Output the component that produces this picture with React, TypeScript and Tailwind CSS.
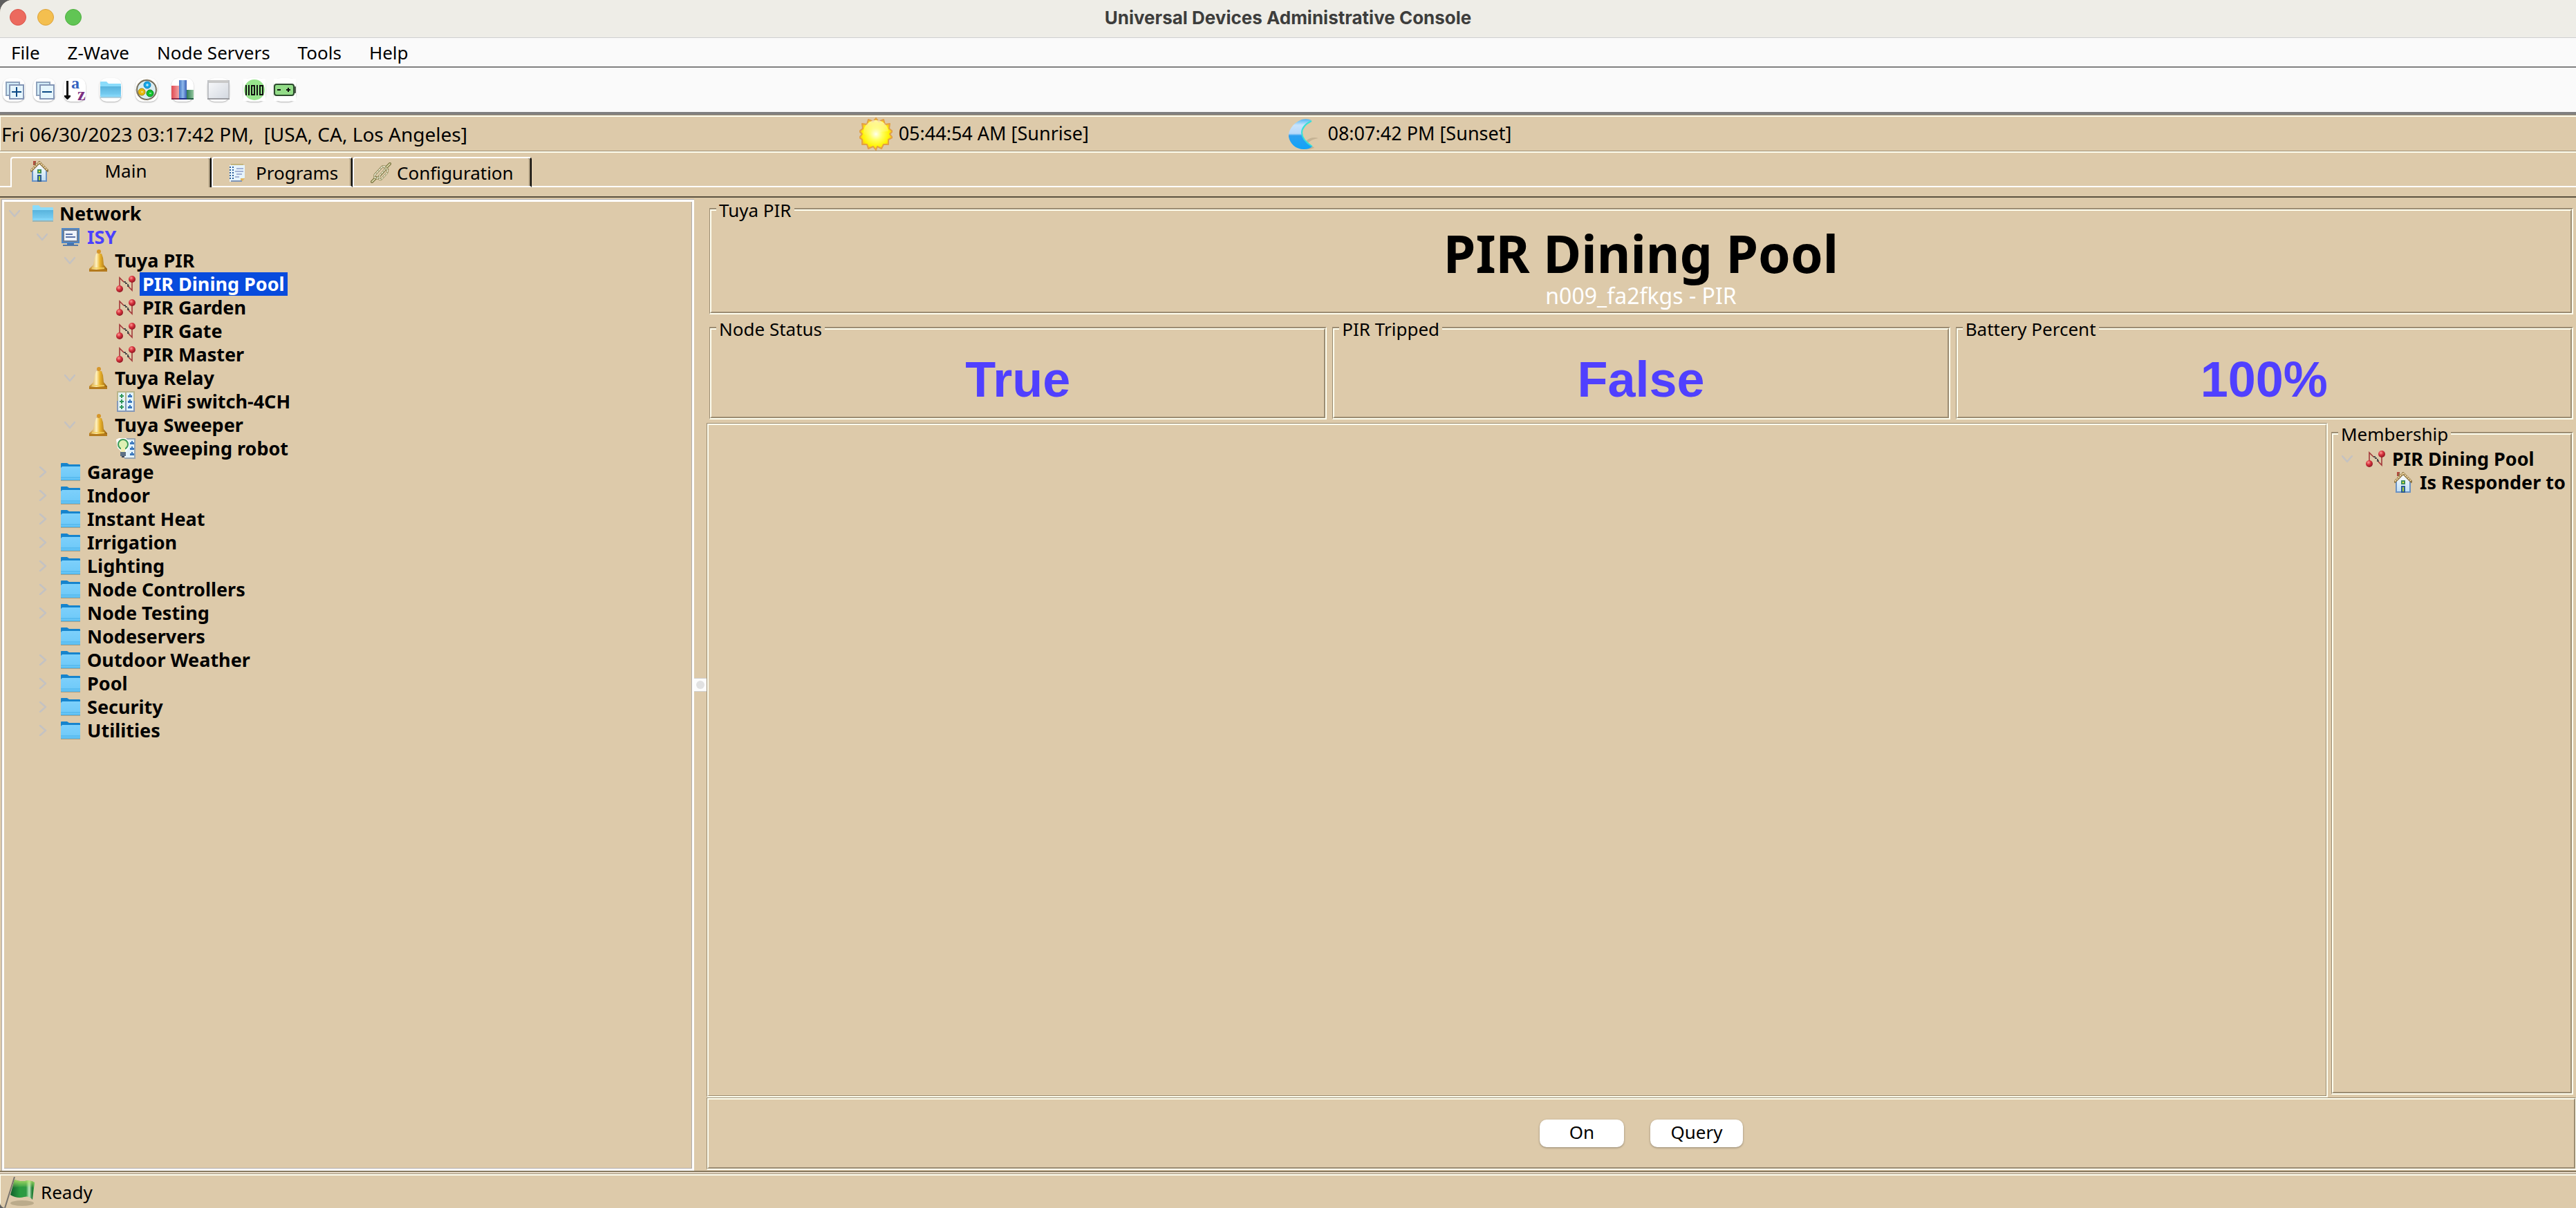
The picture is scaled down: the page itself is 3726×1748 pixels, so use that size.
import { useState, type ReactNode } from "react";

/* ---------- toolbar drawings (32 x 32) ---------- */

function Tool({ children }: { children: ReactNode }) {
  return (
    <svg viewBox="0 0 32 32" className="block h-8 w-8" aria-hidden="true">
      {children}
    </svg>
  );
}

function Squares({ plus }: { plus: boolean }) {
  return (
    <Tool>
      <rect x="5" y="5" width="19" height="19" fill="#d3ecf8" stroke="#8fa3bd" strokeWidth="2" />
      <rect x="10" y="9" width="20" height="21" fill="#fff" />
      <rect x="10" y="9" width="20" height="20" fill="#e6f6fd" stroke="#8395b5" strokeWidth="2" />
      <rect x="13" y="18" width="14" height="2" fill="#0c4a86" />
      {plus && <rect x="19" y="12" width="2" height="14" fill="#0c4a86" />}
    </Tool>
  );
}

function SortAz() {
  return (
    <Tool>
      <path d="M4 3h3v21h3v2l-4 4h-1l-4-4v-2h3z" fill="#0a0a0a" />
      <text x="11" y="14" fontSize="24" fontWeight="700" fontFamily="'Liberation Serif', serif" fill="#3261c0">
        a
      </text>
      <text x="20" y="31" fontSize="26" fontWeight="700" fontFamily="'Liberation Serif', serif" fill="#7c2f80">
        z
      </text>
    </Tool>
  );
}

function OpenFolder() {
  return (
    <svg viewBox="0 0 32 26" className="block h-[26px] w-8" aria-hidden="true">
      <defs>
        <linearGradient id="of" x1="0" y1="0" x2="0" y2="1">
          <stop offset="0" stopColor="#58b3dc" />
          <stop offset="1" stopColor="#7fd3f7" />
        </linearGradient>
      </defs>
      <path d="M1 2q0-1 1-1h8l3 3h17q1 0 1 1v5H1z" fill="#8bdcfb" />
      <path d="M1 8h30v14q0 1-1 1H2q-1 0-1-1z" fill="url(#of)" />
      <path d="M1 24h30" stroke="#5f9fbd" strokeWidth="1" />
      <path d="M2 21h28" stroke="#8fdcfa" strokeWidth="1" />
    </svg>
  );
}

function Ring() {
  return (
    <Tool>
      <circle cx="16" cy="16" r="14" fill="#d9edf2" stroke="#6f6857" strokeWidth="2" />
      <circle cx="16" cy="16" r="15" fill="none" stroke="#b9ae96" strokeWidth="1" strokeDasharray="3 2" />
      <circle cx="17" cy="9" r="5" fill="#12a6e8" stroke="#1580b8" />
      <circle cx="9" cy="19" r="5" fill="#e8b90c" stroke="#a8830c" />
      <circle cx="21" cy="21" r="5" fill="#10c42a" stroke="#0c7c1c" />
      <path d="M15 9h4M17 7v4M8 19h3M20 21h3" stroke="#e9fbff" strokeWidth="1" />
    </Tool>
  );
}

function Bars() {
  return (
    <Tool>
      <defs>
        <linearGradient id="b1">
          <stop offset="0" stopColor="#e14a52" />
          <stop offset="1" stopColor="#f0a4a6" />
        </linearGradient>
        <linearGradient id="b2">
          <stop offset="0" stopColor="#4477c4" />
          <stop offset=".5" stopColor="#8db8ea" />
          <stop offset="1" stopColor="#3a5fb4" />
        </linearGradient>
        <linearGradient id="b3">
          <stop offset="0" stopColor="#2f7a52" />
          <stop offset="1" stopColor="#94c8a0" />
        </linearGradient>
      </defs>
      <rect x="0" y="10" width="11" height="20" fill="url(#b1)" />
      <rect x="11" y="2" width="11" height="28" fill="url(#b2)" />
      <rect x="22" y="16" width="10" height="14" fill="url(#b3)" />
      <path d="M0 29h11" stroke="#8c2b49" strokeWidth="2" />
      <path d="M11 29h11" stroke="#25328c" strokeWidth="2" />
      <path d="M22 29h10" stroke="#235c45" strokeWidth="2" />
    </Tool>
  );
}

function Pane() {
  return (
    <Tool>
      <defs>
        <linearGradient id="pn" x1="0" y1="0" x2="1" y2="1">
          <stop offset="0" stopColor="#f8f9fb" />
          <stop offset="1" stopColor="#d3d8e0" />
        </linearGradient>
      </defs>
      <rect x="1" y="3" width="30" height="26" fill="url(#pn)" stroke="#c0c2c6" strokeWidth="2" />
      <rect x="2" y="2" width="28" height="4" fill="#c9c9c9" />
      <path d="M0 29h32" stroke="#9a9ba0" strokeWidth="2" />
    </Tool>
  );
}

function Bits() {
  return (
    <Tool>
      <rect width="32" height="32" fill="#fff" />
      <circle cx="16" cy="16" r="15" fill="#97e58c" />
      <g fill="none" stroke="#111" strokeWidth="2">
        <path d="M4 9v15M8 9v15M20 9v15" />
        <rect x="12" y="10" width="4" height="13" />
        <rect x="24" y="10" width="4" height="13" />
      </g>
    </Tool>
  );
}

function Battery() {
  return (
    <Tool>
      <rect width="32" height="32" fill="#fff" />
      <rect x="29" y="11" width="3" height="10" rx="1" fill="#4e5a4c" />
      <rect x="1" y="8" width="28" height="16" rx="3" fill="#93dc88" stroke="#2c4a2e" strokeWidth="2" />
      <path d="M5 16h5M18 16h6M21 13v6" stroke="#111" strokeWidth="2" />
    </Tool>
  );
}

/* ---------- tree, tab and bar drawings ---------- */

function House() {
  return (
    <svg viewBox="0 0 13 15" className="block h-[30px] w-[26px]" aria-hidden="true">
      <defs>
        <linearGradient id="hs" x1="0" y1="0" x2="0" y2="1">
          <stop offset="0" stopColor="#ffffff" />
          <stop offset="1" stopColor="#bcdcf2" />
        </linearGradient>
      </defs>
      <path d="M2 0h2v1h-1v2h-1z" fill="#b24a3c" />
      <path d="M3 1h1v2h-1z" fill="#8b6b46" />
      <path d="M1 7l5.500-5.500L12 7v8H1z" fill="url(#hs)" />
      <path d="M1.500 7v7.500h10V7" fill="none" stroke="#6a92c4" />
      <path d="M0 7.500l6.500-6.500 6.500 6.500" fill="none" stroke="#8d7442" strokeWidth="1.800" />
      <path d="M0.500 6.700l6-6 6 6" fill="none" stroke="#f3d9a6" strokeWidth="0.900" strokeDasharray="1.200 0.500" />
      <rect x="5" y="6" width="3" height="3" fill="#3f8f5c" />
      <rect x="6" y="7" width="1" height="1" fill="#f2ea2e" />
      <rect x="5" y="10" width="3" height="5" fill="#2c5c94" />
      <rect x="6" y="11" width="1" height="3" fill="#a6d13c" />
    </svg>
  );
}

function Notes() {
  return (
    <svg viewBox="0 0 11 13" className="block h-[26px] w-[22px]" aria-hidden="true">
      <rect x="1" y="0" width="9" height="1" fill="#c3b47c" />
      <path d="M0 1h11v9l-2 3H0z" fill="#e6f4fc" />
      <g fill="#2d5e9c">
        <rect x="0" y="2" width="1" height="1" /><rect x="2" y="2" width="1" height="1" />
        <rect x="0" y="4" width="1" height="1" /><rect x="2" y="4" width="1" height="1" />
        <rect x="0" y="6" width="1" height="1" /><rect x="2" y="6" width="1" height="1" />
        <rect x="0" y="8" width="1" height="1" /><rect x="2" y="8" width="1" height="1" />
        <rect x="0" y="10" width="1" height="1" /><rect x="2" y="10" width="1" height="1" />
      </g>
      <path d="M5 3.500h5M4 5.500h6M5 7.500h4M4 9.500h3" stroke="#8a9bc8" strokeWidth=".8" />
      <path d="M8 13v-2.500h3L9 13z" fill="#e2b55e" />
      <path d="M1 12.500h8" stroke="#7f95b8" />
    </svg>
  );
}

function Chain() {
  return (
    <svg viewBox="0 0 15 15" className="block h-[30px] w-[30px]" aria-hidden="true">
      <g fill="none" strokeLinecap="round" strokeLinejoin="round">
        <path d="M1 14l3-3M11 4l3-3" stroke="#78733f" strokeWidth="2" />
        <path d="M1 14l3-3M11 4l3-3" stroke="#e9e6b8" strokeWidth=".8" />
        <path d="M3 9l5.500-6 2 0v2.500L5 11.500 3 11z" stroke="#78733f" strokeWidth="1.500" />
        <path d="M3 9l5.500-6 2 0v2.500L5 11.500 3 11z" stroke="#fbfae6" strokeWidth=".7" strokeDasharray="1.400 .8" />
        <path d="M6.500 9.500l4.500-5 1.500.5-.5 2.500-4.500 5-1.500-.5z" stroke="#857f4a" strokeWidth="1.300" />
        <path d="M6.500 9.500l4.500-5 1.500.5-.5 2.500-4.500 5-1.500-.5z" stroke="#fbfae6" strokeWidth=".6" strokeDasharray="1.400 .8" />
      </g>
    </svg>
  );
}

function Sensor() {
  return (
    <svg viewBox="0 0 14 12" className="block h-6 w-7" aria-hidden="true">
      <defs>
        <radialGradient id="rb" cx=".38" cy=".32" r=".7">
          <stop offset="0" stopColor="#ff9a94" />
          <stop offset=".45" stopColor="#d8343f" />
          <stop offset="1" stopColor="#8c1420" />
        </radialGradient>
      </defs>
      <path d="M2.500 9V1.500L5.500 4.500M9 8l2.500 2.500V4" fill="none" stroke="#a3383a" strokeWidth=".8" />
      <path d="M5.500 4.500h1.500M6.500 5.500h1.500M8 6.500h1M8 7.500h1.500" stroke="#20242a" strokeWidth=".8" />
      <circle cx="2.500" cy="9.500" r="2.500" fill="url(#rb)" />
      <circle cx="11.500" cy="2.500" r="2.500" fill="url(#rb)" />
    </svg>
  );
}

function Monitor() {
  return (
    <svg viewBox="0 0 13 13" className="block h-[26px] w-[26px]" aria-hidden="true">
      <rect x="0" y="0" width="13" height="11" fill="#4f87c7" />
      <rect x="1" y="1" width="11" height="9" fill="#6d7f98" />
      <rect x="2" y="2" width="9" height="7" fill="#eef3fb" />
      <path d="M3 4.500h5M3 6.500h7" stroke="#5a73a8" />
      <rect x="4" y="11" width="5" height="1" fill="#3f70ae" />
      <rect x="1" y="12" width="11" height="1" fill="#5479a8" />
    </svg>
  );
}

function Bell() {
  return (
    <svg viewBox="0 0 13 16" className="block h-8 w-[26px]" aria-hidden="true">
      <defs>
        <linearGradient id="bl">
          <stop offset="0" stopColor="#b97a14" />
          <stop offset=".4" stopColor="#fff2c0" />
          <stop offset=".6" stopColor="#eab42c" />
          <stop offset="1" stopColor="#8f5a10" />
        </linearGradient>
      </defs>
      <circle cx="7" cy="1.500" r="1.500" fill="#d6962a" />
      <path d="M5 3h4l1 3 .5 5L13 14v2H0v-2l3-3 1-5z" fill="url(#bl)" />
      <path d="M0 14.500h13v1.500H0z" fill="#b47a1c" />
      <path d="M2 13.500h9" stroke="#f4d060" strokeWidth=".8" />
    </svg>
  );
}

function People({ x }: { x: number }) {
  return (
    <g transform={`translate(${x} 0)`} fill="#3b78bd">
      <path d="M1 2h1v1h1v1.500H0V3h1zM1 6h1v1h1v1.500H0V7h1zM1 10h1v1h1v1.500H0V11h1z" />
    </g>
  );
}

function SwitchBoard() {
  return (
    <svg viewBox="0 0 13 15" className="block h-[30px] w-[26px]" aria-hidden="true">
      <rect width="13" height="15" fill="#b8b58c" />
      <rect x="0" y="7" width="13" height="8" fill="#8598b8" />
      <rect x="1" y="1" width="5" height="13" fill="#e3f3f6" />
      <rect x="7" y="1" width="5" height="13" fill="#e3f3fb" />
      <g fill="#2f9558">
        <path d="M3 2h1v1h1v1H4v1H3V4H2V3h1zM3 6h1v1h1v1H4v1H3V8H2V7h1zM3 10h1v1h1v1H4v1H3v-1H2v-1h1z" />
      </g>
      <People x={8} />
    </svg>
  );
}

function BulbBoard() {
  return (
    <svg viewBox="0 0 14 15" className="block h-[30px] w-7" aria-hidden="true">
      <rect x="6" y="0" width="8" height="15" fill="#9aa6b0" />
      <rect x="7" y="1" width="6" height="13" fill="#e3f3fb" />
      <People x={10} />
      <path d="M0 1l2-1h5l2 2v5l-2 3v4H4v-4L1 7z" fill="#fff" />
      <circle cx="5" cy="4.500" r="3.500" fill="#dff0b4" stroke="#3b9a58" />
      <path d="M3.500 7h3v3h-3z" fill="#f2efb4" />
      <rect x="3" y="10" width="4" height="3" fill="#5e7186" />
      <rect x="4" y="13" width="2" height="1" fill="#3d4a5c" />
    </svg>
  );
}

function Folder() {
  return (
    <svg viewBox="0 0 30 28" className="block h-7 w-[30px]" aria-hidden="true">
      <defs>
        <linearGradient id="fd" x1="0" y1="0" x2="0" y2="1">
          <stop offset="0" stopColor="#7dd0fb" />
          <stop offset="1" stopColor="#6cc8f8" />
        </linearGradient>
      </defs>
      <path d="M1 2q0-1 1-1h8l3 2h15q1 0 1 1v8H1z" fill="#1684cd" />
      <path d="M1 26h28" stroke="#8d8368" strokeWidth="2" opacity=".6" />
      <path d="M1 8l2-2h24l2 0v18q0 2-1 2H2q-1 0-1-2z" fill="url(#fd)" />
      <path d="M1 22h28M1 25h28" stroke="#45aee6" strokeWidth="1" />
    </svg>
  );
}

function Sun() {
  return (
    <svg viewBox="0 0 48 48" className="block h-12 w-12" aria-hidden="true">
      <defs>
        <radialGradient id="sn" cx=".5" cy=".5" r=".5">
          <stop offset="0" stopColor="#fffff0" />
          <stop offset=".4" stopColor="#ffff5a" />
          <stop offset=".8" stopColor="#fff200" />
          <stop offset="1" stopColor="#f7b52a" />
        </radialGradient>
        <linearGradient id="sg" x1="0" y1="0" x2="0" y2="1">
          <stop offset="0" stopColor="#fff8d0" stopOpacity=".8" />
          <stop offset="1" stopColor="#fff8d0" stopOpacity="0" />
        </linearGradient>
      </defs>
      <path
        d="M24 1l4 5 7-3 2 7 7-1-1 7 5 4-4 4 4 5-6 3 0 7-7 0-3 6-6-3-2 5-4-5-7 3-2-6-7 0 0-7-4-3 4-5-4-4 5-4-1-7 7 1 2-7 7 3z"
        fill="url(#sn)"
        stroke="#e2a045"
        strokeWidth="2"
        strokeLinejoin="round"
      />
      <path d="M6 24a18 18 0 0 1 36-4q-16 0-24 6-6 3-12-2z" fill="url(#sg)" />
    </svg>
  );
}

function Moon() {
  return (
    <svg viewBox="0 0 48 48" className="block h-12 w-12" aria-hidden="true">
      <defs>
        <linearGradient id="mn" x1="0" y1="0" x2="0" y2="1">
          <stop offset="0" stopColor="#4cb4f4" />
          <stop offset=".2" stopColor="#c8e4fc" />
          <stop offset=".48" stopColor="#b8d8fa" />
          <stop offset=".55" stopColor="#2e9ff0" />
          <stop offset="1" stopColor="#10a4f8" />
        </linearGradient>
      </defs>
      <path d="M26 34q8-7 18-4-10 1-16 8zM20 45q8 3 18-1l-2-2z" fill="#b5a486" opacity=".6" />
      <path d="M34 4Q28 1 20 3C6 8 0 20 1 28c2 10 10 18 22 18q8 0 12-4Q20 34 20 22T34 4z" fill="url(#mn)" />
      <path d="M34 5Q20 12 20 22t15 20" fill="none" stroke="#35e0d8" strokeWidth="2" />
    </svg>
  );
}

function Flag() {
  return (
    <svg viewBox="0 0 52 46" className="block h-[46px] w-[52px]" aria-hidden="true">
      <defs>
        <linearGradient id="fl" x1="0" y1="0" x2="1" y2="0">
          <stop offset="0" stopColor="#12602c" />
          <stop offset=".4" stopColor="#2a9c40" />
          <stop offset=".65" stopColor="#2f9a44" />
          <stop offset=".78" stopColor="#c2eac0" />
          <stop offset=".9" stopColor="#1f7a34" />
          <stop offset="1" stopColor="#3fae4a" />
        </linearGradient>
        <linearGradient id="fm" x1="0" y1="0" x2="0" y2="1">
          <stop offset="0" stopColor="#b5e36a" stopOpacity=".9" />
          <stop offset="1" stopColor="#b5e36a" stopOpacity="0" />
        </linearGradient>
      </defs>
      <ellipse cx="31" cy="39" rx="17" ry="4" fill="#b3a283" opacity=".8" />
      <path d="M6 46L20 1" stroke="#77736c" strokeWidth="2" />
      <path d="M20 5q8 3 15 2 8-2 14 2l-3 25q-5-6-12-4-10 3-20-3z" fill="url(#fl)" />
      <path d="M20 5q8 3 15 2 8-2 14 2l-1 8q-14-4-31 0z" fill="url(#fm)" />
    </svg>
  );
}

function Chevron({ open }: { open: boolean }) {
  return (
    <svg viewBox="0 0 16 16" className="block h-4 w-4" aria-hidden="true">
      <path
        d={open ? "M1 4l7 8 7-8" : "M5 1l8 7-8 7"}
        fill="none"
        stroke="#c4c2c2"
        strokeWidth="2.500"
        strokeLinecap="round"
        strokeLinejoin="round"
      />
    </svg>
  );
}

/* ---------- tree ---------- */

type NodeItem = { label: string; icon: ReactNode; state?: "open" | "closed"; blue?: boolean; kids?: NodeItem[] };

const closed = (label: string): NodeItem => ({ label, icon: <Folder />, state: "closed" });
const sensor = (label: string): NodeItem => ({ label, icon: <Sensor /> });

const network: NodeItem[] = [
  {
    label: "Network",
    icon: <OpenFolder />,
    state: "open",
    kids: [
      {
        label: "ISY",
        icon: <Monitor />,
        state: "open",
        blue: true,
        kids: [
          {
            label: "Tuya PIR",
            icon: <Bell />,
            state: "open",
            kids: [sensor("PIR Dining Pool"), sensor("PIR Garden"), sensor("PIR Gate"), sensor("PIR Master")],
          },
          { label: "Tuya Relay", icon: <Bell />, state: "open", kids: [{ label: "WiFi switch-4CH", icon: <SwitchBoard /> }] },
          { label: "Tuya Sweeper", icon: <Bell />, state: "open", kids: [{ label: "Sweeping robot", icon: <BulbBoard /> }] },
        ],
      },
      closed("Garage"),
      closed("Indoor"),
      closed("Instant Heat"),
      closed("Irrigation"),
      closed("Lighting"),
      closed("Node Controllers"),
      closed("Node Testing"),
      { label: "Nodeservers", icon: <Folder /> },
      closed("Outdoor Weather"),
      closed("Pool"),
      closed("Security"),
      closed("Utilities"),
    ],
  },
];

const membership: NodeItem[] = [
  {
    label: "PIR Dining Pool",
    icon: <Sensor />,
    state: "open",
    kids: [{ label: "Is Responder to", icon: <House /> }],
  },
];

function Branch({ items, selected, onSelect }: { items: NodeItem[]; selected?: string; onSelect?: (s: string) => void }) {
  return (
    <>
      {items.map((n) => (
        <li key={n.label}>
          <div className="flex h-[34px] items-center">
            {n.state ? (
              <button type="button" aria-label={`Toggle ${n.label}`} className="w-4">
                <Chevron open={n.state === "open"} />
              </button>
            ) : (
              <span className="w-4" />
            )}
            <span className="ml-4 flex w-[34px] justify-center">{n.icon}</span>
            <button
              type="button"
              onClick={() => onSelect?.(n.label)}
              className={
                "ml-[3px] h-[34px] px-1 text-[27px] leading-8 font-bold whitespace-nowrap " +
                (selected === n.label ? "bg-[#074bdd] text-white" : n.blue ? "text-[#4b40ff]" : "text-black")
              }
            >
              {n.label}
            </button>
          </div>
          {n.kids && (
            <ul className="pl-10">
              <Branch items={n.kids} selected={selected} onSelect={onSelect} />
            </ul>
          )}
        </li>
      ))}
    </>
  );
}

/* ---------- framed group with its caption on the border ---------- */

function Group({ title, className, children }: { title: string; className?: string; children: ReactNode }) {
  return (
    <section
      aria-label={title}
      className={"relative flex flex-col border-t-2 border-r-2 border-b-2 border-l border-t-[#9b8c72] border-r-[#fffff0] border-b-[#fffff0] border-l-[#9b8c72] " + (className ?? "")}
    >
      <h2 className="absolute -top-[15px] left-[9px] bg-[#ddcaaa] px-1 text-[26px] leading-8">{title}</h2>
      <div className="flex-1 overflow-hidden border-2 border-t-[#fffff0] border-r-[#9b8c72] border-b-[#9b8c72] border-l-[#fffff0]">
        {children}
      </div>
    </section>
  );
}

const tools: { name: string; icon: ReactNode; gap: boolean }[] = [
  { name: "Expand all", icon: <Squares plus />, gap: false },
  { name: "Collapse all", icon: <Squares plus={false} />, gap: false },
  { name: "Sort", icon: <SortAz />, gap: true },
  { name: "New folder", icon: <OpenFolder />, gap: true },
  { name: "New scene", icon: <Ring />, gap: true },
  { name: "Energy chart", icon: <Bars />, gap: true },
  { name: "Event viewer", icon: <Pane />, gap: true },
  { name: "Write updates", icon: <Bits />, gap: false },
  { name: "Battery writes", icon: <Battery />, gap: false },
];

const readings = [
  { title: "Node Status", value: "True" },
  { title: "PIR Tripped", value: "False" },
  { title: "Battery Percent", value: "100%" },
];

export default function App() {
  const [selected, setSelected] = useState("PIR Dining Pool");
  return (
    <div className="min-h-screen bg-[#5f5f5f]">
      <div className="flex min-h-screen flex-col overflow-hidden rounded-tl-[18px] rounded-bl-[8px] bg-[#ddcaaa] font-['Noto_Sans',sans-serif] text-[26px] text-black">
        <header className="relative flex h-[55px] items-center border-b border-[#cfcfd1] bg-[#eeede7] pb-1">
          <div className="flex gap-4 pl-[14px]">
            <button type="button" aria-label="Close" className="h-6 w-6 rounded-full border border-[#d8564b] bg-[#ec6a5e]" />
            <button type="button" aria-label="Minimize" className="h-6 w-6 rounded-full border border-[#dba23c] bg-[#f4bf4f]" />
            <button type="button" aria-label="Zoom" className="h-6 w-6 rounded-full border border-[#4fae41] bg-[#61c554]" />
          </div>
          <h1 className="pointer-events-none absolute inset-x-0 text-center font-['Inter',sans-serif] text-[26px] font-bold text-[#3d3d3c]">
            Universal Devices Administrative Console
          </h1>
        </header>

        <nav className="flex h-[43px] items-center gap-10 border-b-2 border-[#808080] bg-[#fafafa] pl-4 text-[26px]">
          {["File", "Z-Wave", "Node Servers", "Tools", "Help"].map((m) => (
            <button key={m} type="button" className="leading-[38px]">
              {m}
            </button>
          ))}
        </nav>

        <div className="flex h-[68px] items-center border-b-4 border-[#808080] bg-[#fafafa] pl-1" role="toolbar">
          {tools.map((t) => (
            <button
              key={t.name}
              type="button"
              aria-label={t.name}
              className={
                "flex h-[34px] w-8 items-center justify-center rounded-[10px] bg-white shadow-[0_1px_2px_rgba(0,0,0,0.3)] " +
                (t.gap ? "mr-5" : "mr-3")
              }
            >
              {t.icon}
            </button>
          ))}
        </div>

        <div className="border-y border-t-[#9b8c72] border-b-[#9b8c72]">
          <div className="grid h-[51px] grid-cols-6 items-center border-t-2 border-l border-[#fffff0] text-[27px] whitespace-pre">
            <p className="col-span-2 pl-px text-[28px]">{"Fri 06/30/2023 03:17:42 PM,  [USA, CA, Los Angeles]"}</p>
            <p className="flex items-center gap-[9px]">
              <Sun />
              05:44:54 AM [Sunrise]
            </p>
            <p className="col-span-3 flex items-center gap-[9px]">
              <Moon />
              08:07:42 PM [Sunset]
            </p>
          </div>
        </div>
        <div className="h-2 border-t-2 border-[#fffff0]" />

        <div role="tablist" className="flex h-11 items-stretch">
          <div className="w-[15px] border-b-2 border-white" />
          <button
            type="button"
            role="tab"
            aria-selected="true"
            className="flex w-[291px] rounded-t-[4px] border-t-2 border-r-2 border-l-2 border-t-white border-r-black border-l-white pt-1 pl-[27px] shadow-[inset_-2px_0_#9b8c72]"
          >
            <House />
            <span className="flex-1 pr-[10px] text-center leading-7">Main</span>
          </button>
          <button
            type="button"
            role="tab"
            aria-selected="false"
            className="flex w-[204px] items-center gap-4 rounded-t-[4px] border-t-2 border-r-2 border-b-2 border-l-2 border-t-white border-r-black border-b-white border-l-white pt-0.5 pl-6 shadow-[inset_-2px_0_#9b8c72]"
          >
            <Notes />
            Programs
          </button>
          <button
            type="button"
            role="tab"
            aria-selected="false"
            className="flex w-[259px] items-center gap-2 rounded-t-[4px] border-t-2 border-r-2 border-b-2 border-l-2 border-t-white border-r-black border-b-white border-l-white pt-0.5 pl-6 shadow-[inset_-2px_0_#9b8c72]"
          >
            <Chain />
            Configuration
          </button>
          <div className="flex-1 border-b-2 border-white" />
        </div>
        <div className="h-[15px] border-b-2 border-[#5c5240]" />

        <main className="flex flex-1 pt-0.5">
          <div className="flex w-[1004px] shrink-0 pl-0.5">
            <div className="flex flex-1 border-t border-l border-[#b0acac]">
              <div className="flex flex-1 border-[3px] border-white">
                <ul className="flex-1 border-r border-b border-[#b0acac] pl-[7px]">
                  <Branch items={network} selected={selected} onSelect={setSelected} />
                </ul>
              </div>
            </div>
          </div>

          <div className="flex w-[18px] items-center">
            <button
              type="button"
              aria-label="Resize panels"
              className="flex h-5 w-full items-center justify-center border-y border-[#d0cfcd] bg-[#fcfcfc]"
            >
              <span className="h-3 w-3 rounded-full bg-[#e1e1e1]" />
            </button>
          </div>

          <div className="flex min-w-0 flex-1 flex-col">
            <Group title="Tuya PIR" className="mt-[13px] mr-1 ml-1">
              <div className="flex flex-col items-center gap-[9px] pt-6 pb-[7px]">
                <p className="text-[75px] leading-[74px] font-bold">PIR Dining Pool</p>
                <p className="text-[32px] leading-8 text-white">n009_fa2fkgs - PIR</p>
              </div>
            </Group>

            <div className="mt-[18px] mr-1 ml-1 grid grid-cols-3 gap-2">
              {readings.map((r) => (
                <Group key={r.title} title={r.title}>
                  <p className="pt-9 pb-[18px] text-center font-['Liberation_Sans',sans-serif] text-[72px] leading-[72px] font-bold text-[#5040ff]">
                    {r.value}
                  </p>
                </Group>
              ))}
            </div>

            <div className="mt-[5px] flex flex-1">
              <div className="flex flex-1 border-t border-r-2 border-b-2 border-l border-t-[#9b8c72] border-r-[#fffff0] border-b-[#fffff0] border-l-[#9b8c72]">
                <div className="flex-1 border-t-2 border-r border-b border-l-2 border-t-[#fffff0] border-r-[#9b8c72] border-b-[#9b8c72] border-l-[#fffff0]" />
              </div>
              <Group title="Membership" className="mt-[13px] mr-1 mb-1 ml-[5px] w-[350px]">
                <ul className="pt-[18px] pl-3">
                  <Branch items={membership} />
                </ul>
              </Group>
            </div>

            <div className="mb-px flex h-[105px] border-t border-r border-b-2 border-l border-t-[#9b8c72] border-r-[#fffff0] border-b-[#fffff0] border-l-[#9b8c72]">
              <div className="flex flex-1 items-center justify-center gap-[38px] border-2 border-t-[#fffff0] border-r-[#9b8c72] border-b-[#9b8c72] border-l-[#fffff0]">
                <button type="button" className="h-10 w-[122px] rounded-[10px] bg-white pb-1 leading-8 shadow-[0_1px_3px_rgba(0,0,0,0.35)]">
                  On
                </button>
                <button type="button" className="h-10 w-[134px] rounded-[10px] bg-white pb-1 leading-8 shadow-[0_1px_3px_rgba(0,0,0,0.35)]">
                  Query
                </button>
              </div>
            </div>
          </div>
        </main>

        <footer>
          <div className="h-1 border-t-2 border-[#87795f] bg-[#e9dccb]" />
          <div className="flex h-[50px] border-t border-[#9b8c72]">
            <div className="flex flex-1 items-center gap-1.5 border-t-2 border-l border-[#fffff0]">
              <Flag />
              <span className="pt-0.5">Ready</span>
            </div>
          </div>
        </footer>
      </div>
    </div>
  );
}
